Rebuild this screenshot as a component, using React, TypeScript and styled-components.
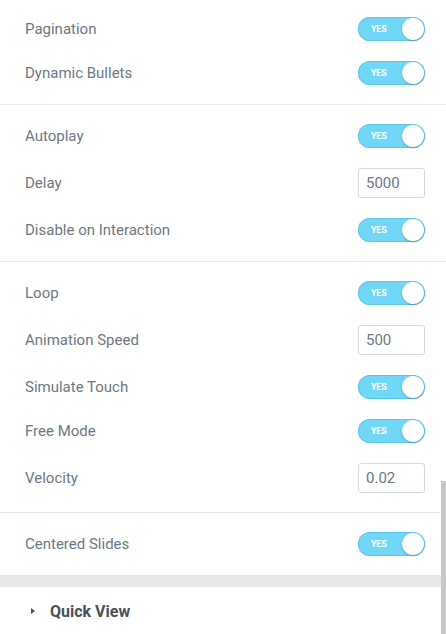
import React from 'react'
import styled, { createGlobalStyle } from 'styled-components'

const GlobalStyle = createGlobalStyle`
   html, body {
      margin: 0;
      padding: 0;
      background: #fff;
   }
   body {
      font-family: Roboto, 'Liberation Sans', sans-serif;
      width: 446px;
      height: 634px;
      overflow: hidden;
   }
`

const Panel = styled.div`
   position: relative;
   width: 446px;
   height: 634px;
   overflow: hidden;
   background: #fff;
`

const Section = styled.div<{ $first?: boolean }>`
   display: flex;
   flex-direction: column;
   gap: 20px;
   padding: ${(p) => (p.$first ? '17px' : '19px')} 21px 19px 25px;
   border-top: ${(p) => (p.$first ? 'none' : '1px solid #e6e9ec')};
`

const Row = styled.div`
   display: flex;
   align-items: center;
   justify-content: space-between;
`

const Label = styled.span`
   font-size: 15px;
   color: #6d7882;
`

const Switch = styled.div`
   position: relative;
   width: 67px;
   height: 24px;
   border-radius: 12px;
   background: #71d7f7;
   box-shadow: inset 0 0 0 1px #5fc8ea;
   box-sizing: border-box;

   span {
      position: absolute;
      left: 13px;
      top: 0;
      line-height: 24px;
      font-size: 9px;
      font-weight: 700;
      color: #fff;
      letter-spacing: -0.2px;
   }

   &::after {
      content: '';
      position: absolute;
      right: 1px;
      top: 1px;
      width: 22px;
      height: 22px;
      border-radius: 50%;
      background: #fff;
      box-shadow: 0 1px 2px rgba(0, 0, 0, 0.25);
   }
`

const NumberBox = styled.input`
   width: 67px;
   height: 30px;
   box-sizing: border-box;
   border: 1px solid #d5dadf;
   border-radius: 3px;
   padding: 0 7px;
   font-family: Roboto, 'Liberation Sans', sans-serif;
   font-size: 15px;
   color: #6d7882;
   background: #fff;
   outline: none;
`

const Band = styled.div`
   height: 12px;
   background: #e6e8ea;
`

const Accordion = styled.div`
   display: flex;
   align-items: center;
   gap: 15px;
   height: 48px;
   padding-left: 31px;
`

const Caret = styled.span`
   width: 0;
   height: 0;
   border-top: 3.5px solid transparent;
   border-bottom: 3.5px solid transparent;
   border-left: 4px solid #495157;
`

const AccordionTitle = styled.span`
   font-size: 16px;
   font-weight: 700;
   color: #495157;
`

const Scrollbar = styled.div`
   position: absolute;
   right: 0;
   top: 481px;
   width: 5px;
   bottom: 0;
   background: #c7c7c7;
`

type Item = { label: string; value?: string }

const sections: Item[][] = [
   [{ label: 'Pagination' }, { label: 'Dynamic Bullets' }],
   [
      { label: 'Autoplay' },
      { label: 'Delay', value: '5000' },
      { label: 'Disable on Interaction' },
   ],
   [
      { label: 'Loop' },
      { label: 'Animation Speed', value: '500' },
      { label: 'Simulate Touch' },
      { label: 'Free Mode' },
      { label: 'Velocity', value: '0.02' },
   ],
   [{ label: 'Centered Slides' }],
]

export default function App() {
   return (
      <>
         <GlobalStyle />
         <Panel>
            {sections.map((items, i) => (
               <Section key={i} $first={i === 0}>
                  {items.map((item) => (
                     <Row key={item.label}>
                        <Label>{item.label}</Label>
                        {item.value ? (
                           <NumberBox type="text" defaultValue={item.value} />
                        ) : (
                           <Switch>
                              <span>YES</span>
                           </Switch>
                        )}
                     </Row>
                  ))}
               </Section>
            ))}
            <Band />
            <Accordion>
               <Caret />
               <AccordionTitle>Quick View</AccordionTitle>
            </Accordion>
            <Scrollbar />
         </Panel>
      </>
   )
}
